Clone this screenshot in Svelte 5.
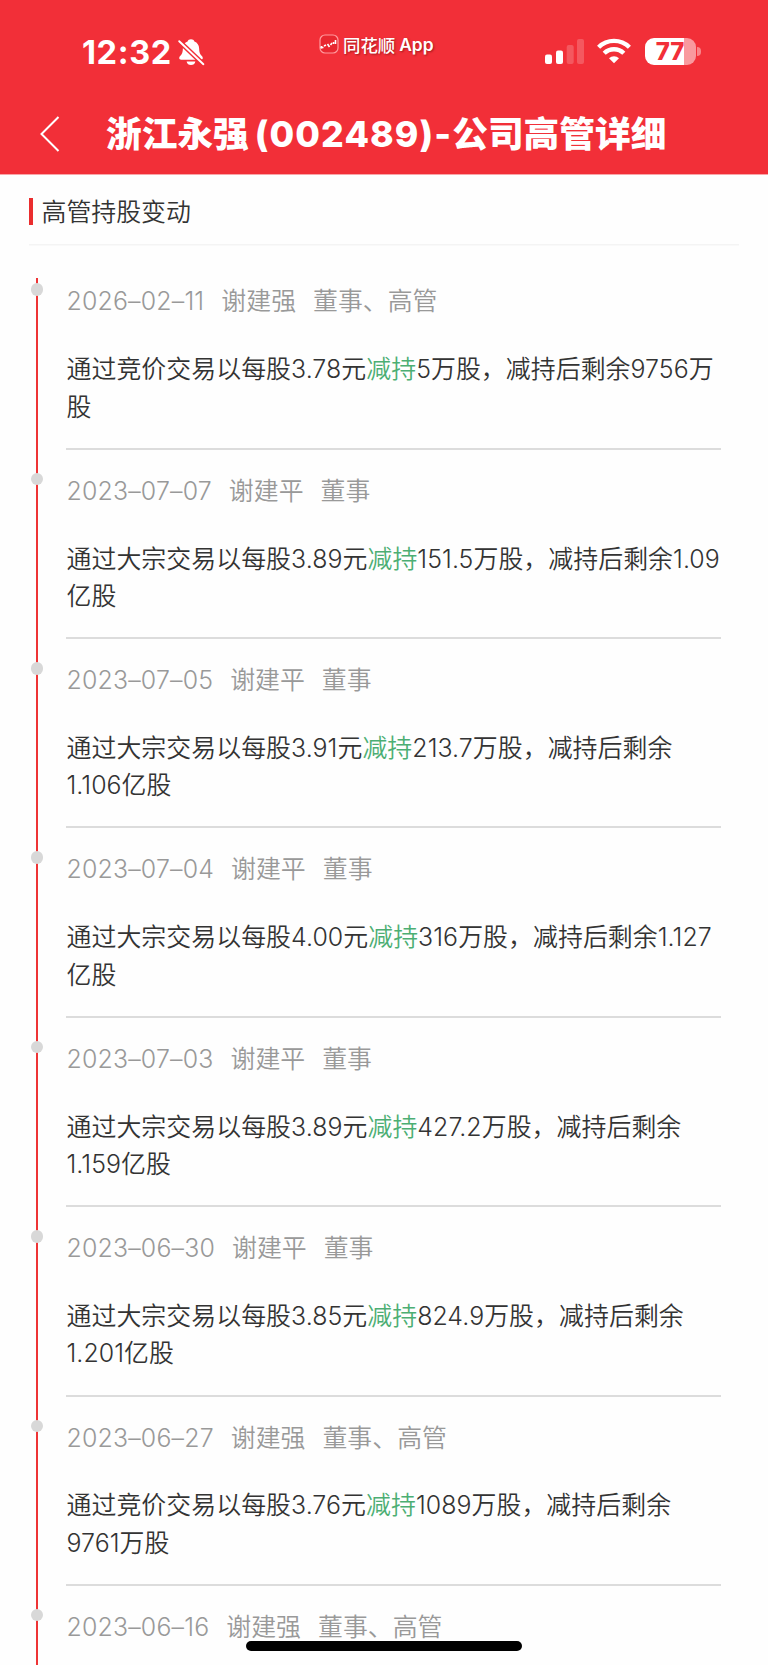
<script lang="ts">
  type Change = {
    date: string;
    name: string;
    role: string;
    way: string;
    price: string;
    amount: string;
    left: string;
  };

  const code = '002489';
  const company = '浙江永强';

  const changes: Change[] = [
    { date: '2026–02–11', name: '谢建强', role: '董事、高管', way: '竞价', price: '3.78', amount: '5万', left: '9756万' },
    { date: '2023–07–07', name: '谢建平', role: '董事', way: '大宗', price: '3.89', amount: '151.5万', left: '1.09亿' },
    { date: '2023–07–05', name: '谢建平', role: '董事', way: '大宗', price: '3.91', amount: '213.7万', left: '1.106亿' },
    { date: '2023–07–04', name: '谢建平', role: '董事', way: '大宗', price: '4.00', amount: '316万', left: '1.127亿' },
    { date: '2023–07–03', name: '谢建平', role: '董事', way: '大宗', price: '3.89', amount: '427.2万', left: '1.159亿' },
    { date: '2023–06–30', name: '谢建平', role: '董事', way: '大宗', price: '3.85', amount: '824.9万', left: '1.201亿' },
    { date: '2023–06–27', name: '谢建强', role: '董事、高管', way: '竞价', price: '3.76', amount: '1089万', left: '9761万' },
    { date: '2023–06–16', name: '谢建强', role: '董事、高管', way: '', price: '', amount: '', left: '' }
  ];
</script>

<div class="screen">
  <header>
    <div class="status-bar">
      <div class="status-left">
        <span class="time">12:32</span>
        <svg class="bell" viewBox="0 0 28 28" fill="#fff">
          <path d="M14 1.2c-1.7 0-3 .9-3.4 2.2C7.6 4.5 6 7 5.9 10.3c-.1 4.2-.9 5.8-2.5 7.5-.7.8-1.2 1.4-1.2 2.2 0 1 .8 1.7 2 1.7h19.6c1.2 0 2-.7 2-1.7 0-.8-.5-1.4-1.2-2.2-1.6-1.7-2.4-3.3-2.5-7.5C22 7 20.4 4.5 17.4 3.4 17 2.1 15.7 1.2 14 1.2z" />
          <path d="M9.6 23.4h8.8c-.4 2.2-2.2 3.6-4.4 3.6s-4-1.4-4.4-3.6z" />
          <path d="M2.2 3.2 26.4 26.2" stroke="#f22f38" stroke-width="4.8" />
          <path d="M2.2 3.2 26.4 26.2" stroke="#fff" stroke-width="1.9" stroke-linecap="round" />
        </svg>
      </div>
      <div class="brand">
        <svg class="brand-logo" viewBox="0 0 20 20" fill="none">
          <rect x="1" y="1" width="18" height="18" rx="5" fill="#e92730" stroke="#ff9a9d" stroke-width="1.2" />
          <path d="M1.500 13.500h3M5 12l2-1M8.500 10l2 3M11.500 11l1.500-2" stroke="#fff" stroke-width="1.600" />
          <path d="M16.500 6v4M14.500 8v2M2.500 12v2.500" stroke="#fff" stroke-width="1.600" />
        </svg>
        <span>同花顺</span><span class="brand-app">App</span>
      </div>
      <div class="status-right">
        <svg class="signal" viewBox="0 0 39 26" fill="#fff">
          <rect x="0" y="15.5" width="7" height="9.5" rx="2" />
          <rect x="11" y="11.5" width="7" height="13.5" rx="2" />
          <rect x="21.7" y="6" width="7" height="19" rx="2" opacity=".2" />
          <rect x="32" y="0" width="7" height="25" rx="2" opacity=".2" />
        </svg>
        <svg class="wifi" viewBox="0 0 34 26" fill="none" stroke="#fff" stroke-width="4.4">
          <path d="M1.6 9.2a22 22 0 0 1 30.8 0" />
          <path d="M7.2 15.2a14 14 0 0 1 19.6 0" />
          <path d="M17 25.3l-5-5.1a7.2 7.2 0 0 1 10 0z" fill="#fff" stroke="none" />
        </svg>
        <div class="battery">
          <span class="battery-level">77</span>
          <span class="battery-cap"></span>
        </div>
      </div>
    </div>
    <div class="nav">
      <svg class="back" viewBox="0 0 20 36" fill="none" stroke="#fff" stroke-width="2">
        <path d="M18.5 1 1.5 18l17 17" />
      </svg>
      <h1>{company}<span class="title-code">({code})-</span>公司高管详细</h1>
    </div>
  </header>

  <main>
    <h2><i class="mark"></i>高管持股变动</h2>
    <ul class="timeline">
      {#each changes as item}
        <li>
          <i class="dot"></i>
          <div class="meta">
            <span class="date">{item.date}</span>
            <span>{item.name}</span>
            <span>{item.role}</span>
          </div>
          {#if item.price}
            <p>
              通过{item.way}交易以每股{item.price}元<em>减持</em>{item.amount}股，减持后剩余{item.left}股
            </p>
          {/if}
        </li>
      {/each}
    </ul>
  </main>

  <div class="home-indicator"></div>
</div>

<style>
  :global(body) {
    background: #fff;
  }

  .screen {
    position: relative;
    width: 768px;
    height: 1665px;
    overflow: hidden;
    background: #fefefe;
    color: #333;
    font-family: Inter, 'Noto Sans CJK SC', sans-serif;
  }

  header {
    height: 175px;
    background: #f22f38;
    border-bottom: 1px solid #f9a5a8;
    box-sizing: border-box;
    color: #fff;
  }

  .status-bar {
    display: grid;
    grid-template-columns: 319px 1fr 223px;
    height: 92px;
  }

  .status-left {
    display: flex;
    align-items: flex-start;
    padding: 33px 0 0 82px;
  }

  .time {
    width: 95px;
    font-size: 32.5px;
    line-height: 40px;
    font-weight: 700;
    letter-spacing: 0.6px;
    white-space: nowrap;
  }

  .bell {
    width: 28px;
    height: 28px;
    margin-top: 5px;
  }

  .brand {
    display: flex;
    align-items: center;
    height: 28px;
    margin-top: 30px;
    font-size: 17.4px;
    font-weight: 500;
    white-space: nowrap;
    text-shadow: 1px 1px 2px rgba(90, 0, 0, 0.5);
  }

  .brand-logo {
    width: 20px;
    height: 20px;
    margin: 0 4px 0 0;
  }

  .brand-app {
    margin-left: 4px;
    font-weight: 600;
  }

  .status-right {
    display: flex;
    align-items: flex-start;
    padding-top: 38px;
  }

  .signal {
    width: 39px;
    height: 26px;
    margin-top: 1px;
  }

  .wifi {
    width: 34px;
    height: 26px;
    margin-left: 13px;
  }

  .battery {
    position: relative;
    width: 51px;
    height: 27px;
    margin-left: 14px;
    border-radius: 9px;
    background: linear-gradient(90deg, #fff 77%, #f9999e 77%);
  }

  .battery-level {
    display: block;
    color: #f22f38;
    font-size: 24px;
    line-height: 27px;
    font-weight: 800;
    text-align: center;
    text-indent: -1px;
    letter-spacing: 0;
  }

  .battery-cap {
    position: absolute;
    left: 52px;
    top: 9px;
    width: 4px;
    height: 9px;
    border-radius: 0 5px 5px 0;
    background: #f9858a;
  }

  .nav {
    display: flex;
    align-items: center;
    height: 82px;
    padding-left: 40px;
  }

  .back {
    width: 20px;
    height: 36px;
    margin-top: 2px;
  }

  h1 {
    margin: 2px 0 0 46px;
    font-size: 35.7px;
    line-height: 50px;
    font-weight: 800;
    white-space: nowrap;
  }

  .title-code {
    margin-left: 6px;
    letter-spacing: 1.1px;
  }

  main {
    padding: 0 29px;
  }

  h2 {
    display: flex;
    align-items: center;
    height: 69px;
    margin: 0;
    box-sizing: border-box;
    box-shadow: 0 1.5px 0 #f4f4f4;
    font-size: 24.9px;
    font-weight: 350;
  }

  .mark {
    width: 3.5px;
    height: 27px;
    margin: 4px 9px 0 0;
    background: #ea2d2e;
  }

  .timeline {
    position: relative;
    margin: 0;
    padding: 16.4px 18px 0 37px;
    list-style: none;
  }

  .timeline::before {
    content: '';
    position: absolute;
    left: 7px;
    top: 34px;
    width: 2px;
    height: 1400px;
    background: #ee3435;
  }

  li {
    position: relative;
    box-sizing: border-box;
    height: 189.36px;
    padding-top: 22px;
    border-bottom: 2px solid #dcdcdc;
  }

  .dot {
    position: absolute;
    left: -35.5px;
    top: 23px;
    width: 12.5px;
    height: 12.5px;
    border-radius: 50%;
    background: #d8d8d8;
  }

  .meta {
    display: flex;
    gap: 17px;
    padding-left: 0.5px;
    color: #999;
    font-size: 24.9px;
    line-height: 38px;
    font-weight: 350;
    white-space: nowrap;
  }

  .date {
    letter-spacing: 0.18px;
  }

  p {
    margin: 30.8px 0 0 0.5px;
    font-size: 24.9px;
    line-height: 37.5px;
    font-weight: 350;
    letter-spacing: 0.06px;
  }

  em {
    color: #4cae73;
    font-style: normal;
  }

  .home-indicator {
    position: absolute;
    left: 246px;
    bottom: 14px;
    width: 276px;
    height: 10px;
    border-radius: 5px;
    background: #000;
  }
</style>
